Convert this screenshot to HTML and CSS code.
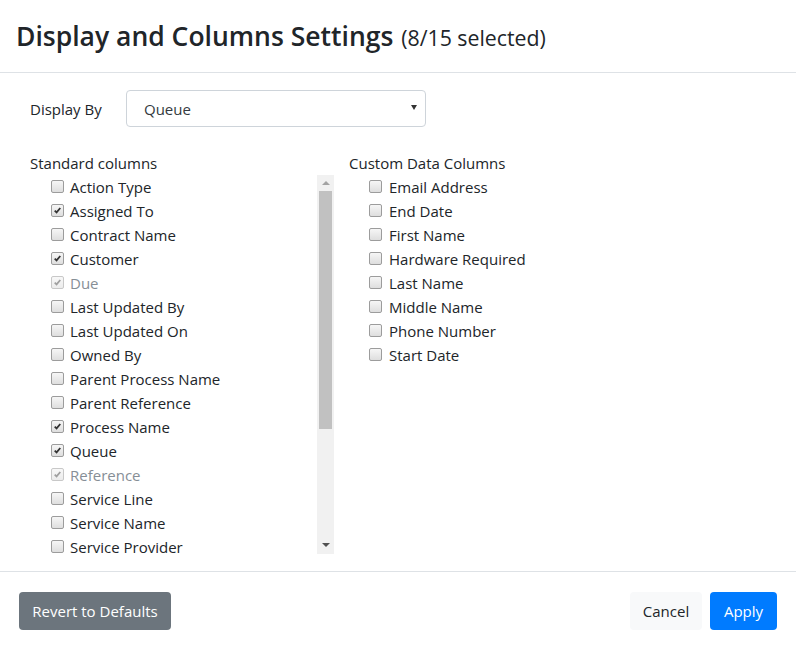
FILE: index.html
```html
<!DOCTYPE html>
<html>
<head>
<meta charset="utf-8">
<link rel="stylesheet" href="styles.css">
</head>
<body>
<div class="modal">
  <div class="modal-header">
    <h3 class="title">Display and Columns Settings <span class="count">(8/15 selected)</span></h3>
  </div>
  <div class="modal-body">
    <div class="display-row">
      <span class="label">Display By</span>
      <div class="select"><span>Queue</span><span class="caret"></span></div>
    </div>
    <div class="columns">
      <div class="col-std">
        <div class="heading">Standard columns</div>
        <div class="listbox">
          <div class="list">
            <label class="item"><span class="cb"></span>Action Type</label>
            <label class="item"><span class="cb on"><svg viewBox="0 0 13 13"><path d="M3.2 6.6 L5.4 8.8 L9.8 3.6"/></svg></span>Assigned To</label>
            <label class="item"><span class="cb"></span>Contract Name</label>
            <label class="item"><span class="cb on"><svg viewBox="0 0 13 13"><path d="M3.2 6.6 L5.4 8.8 L9.8 3.6"/></svg></span>Customer</label>
            <label class="item dis"><span class="cb on"><svg viewBox="0 0 13 13"><path d="M3.2 6.6 L5.4 8.8 L9.8 3.6"/></svg></span>Due</label>
            <label class="item"><span class="cb"></span>Last Updated By</label>
            <label class="item"><span class="cb"></span>Last Updated On</label>
            <label class="item"><span class="cb"></span>Owned By</label>
            <label class="item"><span class="cb"></span>Parent Process Name</label>
            <label class="item"><span class="cb"></span>Parent Reference</label>
            <label class="item"><span class="cb on"><svg viewBox="0 0 13 13"><path d="M3.2 6.6 L5.4 8.8 L9.8 3.6"/></svg></span>Process Name</label>
            <label class="item"><span class="cb on"><svg viewBox="0 0 13 13"><path d="M3.2 6.6 L5.4 8.8 L9.8 3.6"/></svg></span>Queue</label>
            <label class="item dis"><span class="cb on"><svg viewBox="0 0 13 13"><path d="M3.2 6.6 L5.4 8.8 L9.8 3.6"/></svg></span>Reference</label>
            <label class="item"><span class="cb"></span>Service Line</label>
            <label class="item"><span class="cb"></span>Service Name</label>
            <label class="item"><span class="cb"></span>Service Provider</label>
          </div>
          <div class="scrollbar">
            <span class="arrow up"></span>
            <div class="track"><div class="thumb"></div></div>
            <span class="arrow down"></span>
          </div>
        </div>
      </div>
      <div class="col-custom">
        <div class="heading">Custom Data Columns</div>
        <div class="list custom">
          <label class="item"><span class="cb"></span>Email Address</label>
          <label class="item"><span class="cb"></span>End Date</label>
          <label class="item"><span class="cb"></span>First Name</label>
          <label class="item"><span class="cb"></span>Hardware Required</label>
          <label class="item"><span class="cb"></span>Last Name</label>
          <label class="item"><span class="cb"></span>Middle Name</label>
          <label class="item"><span class="cb"></span>Phone Number</label>
          <label class="item"><span class="cb"></span>Start Date</label>
        </div>
      </div>
    </div>
  </div>
  <div class="modal-footer">
    <button class="btn btn-secondary">Revert to Defaults</button>
    <div class="right">
      <button class="btn btn-light">Cancel</button>
      <button class="btn btn-primary">Apply</button>
    </div>
  </div>
</div>
</body>
</html>
```

FILE: styles.css
```css
* { box-sizing: border-box; }
html, body { margin: 0; padding: 0; background: #fff; }
body {
  font-family: "Open Sans", "Noto Sans", sans-serif;
  font-size: 15px;
  line-height: 24px;
  color: #212529;
  width: 796px;
  height: 650px;
  overflow: hidden;
}
.modal { display: flex; flex-direction: column; height: 650px; }
.modal-header {
  height: 73px;
  border-bottom: 1px solid #dee2e6;
  padding: 0 16px;
  display: flex;
  align-items: center;
}
.title {
  margin: 0;
  font-size: 26.5px;
  font-weight: 600;
  line-height: 32px;
  padding-top: 2px;
  white-space: nowrap;
}
.count { font-size: 21.3px; font-weight: 400; margin-left: 1px; }
.modal-body {
  height: 498px;
  padding: 17px 30px 0 30px;
}
.display-row { display: flex; align-items: center; gap: 24px; }
.label { width: 72px; }
.select {
  width: 300px;
  height: 37px;
  border: 1px solid #ced4da;
  border-radius: 4px;
  display: flex;
  align-items: center;
  justify-content: space-between;
  padding: 0 8px 0 17px;
  color: #343a40;
}
.caret {
  width: 0; height: 0;
  border-left: 3.5px solid transparent;
  border-right: 3.5px solid transparent;
  border-top: 5px solid #333;
  margin-top: -2px;
}
.columns { display: flex; gap: 15px; margin-top: 24px; }
.col-std { width: 304px; }
.heading { line-height: 24px; }
.listbox { display: flex; height: 379px; }
.list { flex: 1; padding-left: 21px; }
.list.custom { padding-left: 20px; }
.item { display: flex; align-items: center; height: 24px; white-space: nowrap; }
.item.dis { color: #868e96; }
.cb {
  width: 13px; height: 13px;
  border: 1px solid #9c9c9c;
  border-radius: 2px;
  background: linear-gradient(#f6f6f6, #dedede);
  margin-right: 6px;
  flex: none;
  display: flex;
  margin-top: -1px;
}
.custom .cb { margin-right: 7px; }
.cb svg { width: 11px; height: 11px; }
.cb path { fill: none; stroke: #333; stroke-width: 2.1; }
.dis .cb { border-color: #c8c8c8; background: linear-gradient(#f8f8f8, #ececec); }
.dis .cb path { stroke: #a0a0a0; }
.scrollbar {
  width: 17px;
  flex: none;
  background: #f1f1f1;
  display: flex;
  flex-direction: column;
  align-items: center;
}
.arrow { width: 0; height: 0; border-left: 4px solid transparent; border-right: 4px solid transparent; }
.arrow.up { border-bottom: 4px solid #a3a3a3; margin: 6px 0 6px; }
.arrow.down { border-top: 4px solid #505050; margin: 6px 0 7px; }
.track { flex: 1; width: 100%; padding: 0 2px; }
.thumb { height: 238px; background: #c1c1c1; }
.col-custom { flex: 1; }
.modal-footer {
  flex: 1;
  border-top: 1px solid #dee2e6;
  display: flex;
  align-items: center;
  justify-content: space-between;
  padding: 0 19px 0 19px;
}
.right { display: flex; gap: 8px; }
.btn {
  font-family: inherit;
  font-size: 15px;
  height: 38px;
  border: 1px solid transparent;
  border-radius: 4px;
  padding: 0 8px;
  line-height: 36px;
  white-space: nowrap;
}
.btn-secondary { background: #6c757d; color: #fff; width: 152px; }
.btn-light { background: #f8f9fa; color: #212529; width: 72px; }
.btn-primary { background: #007bff; color: #fff; width: 67px; }
```
